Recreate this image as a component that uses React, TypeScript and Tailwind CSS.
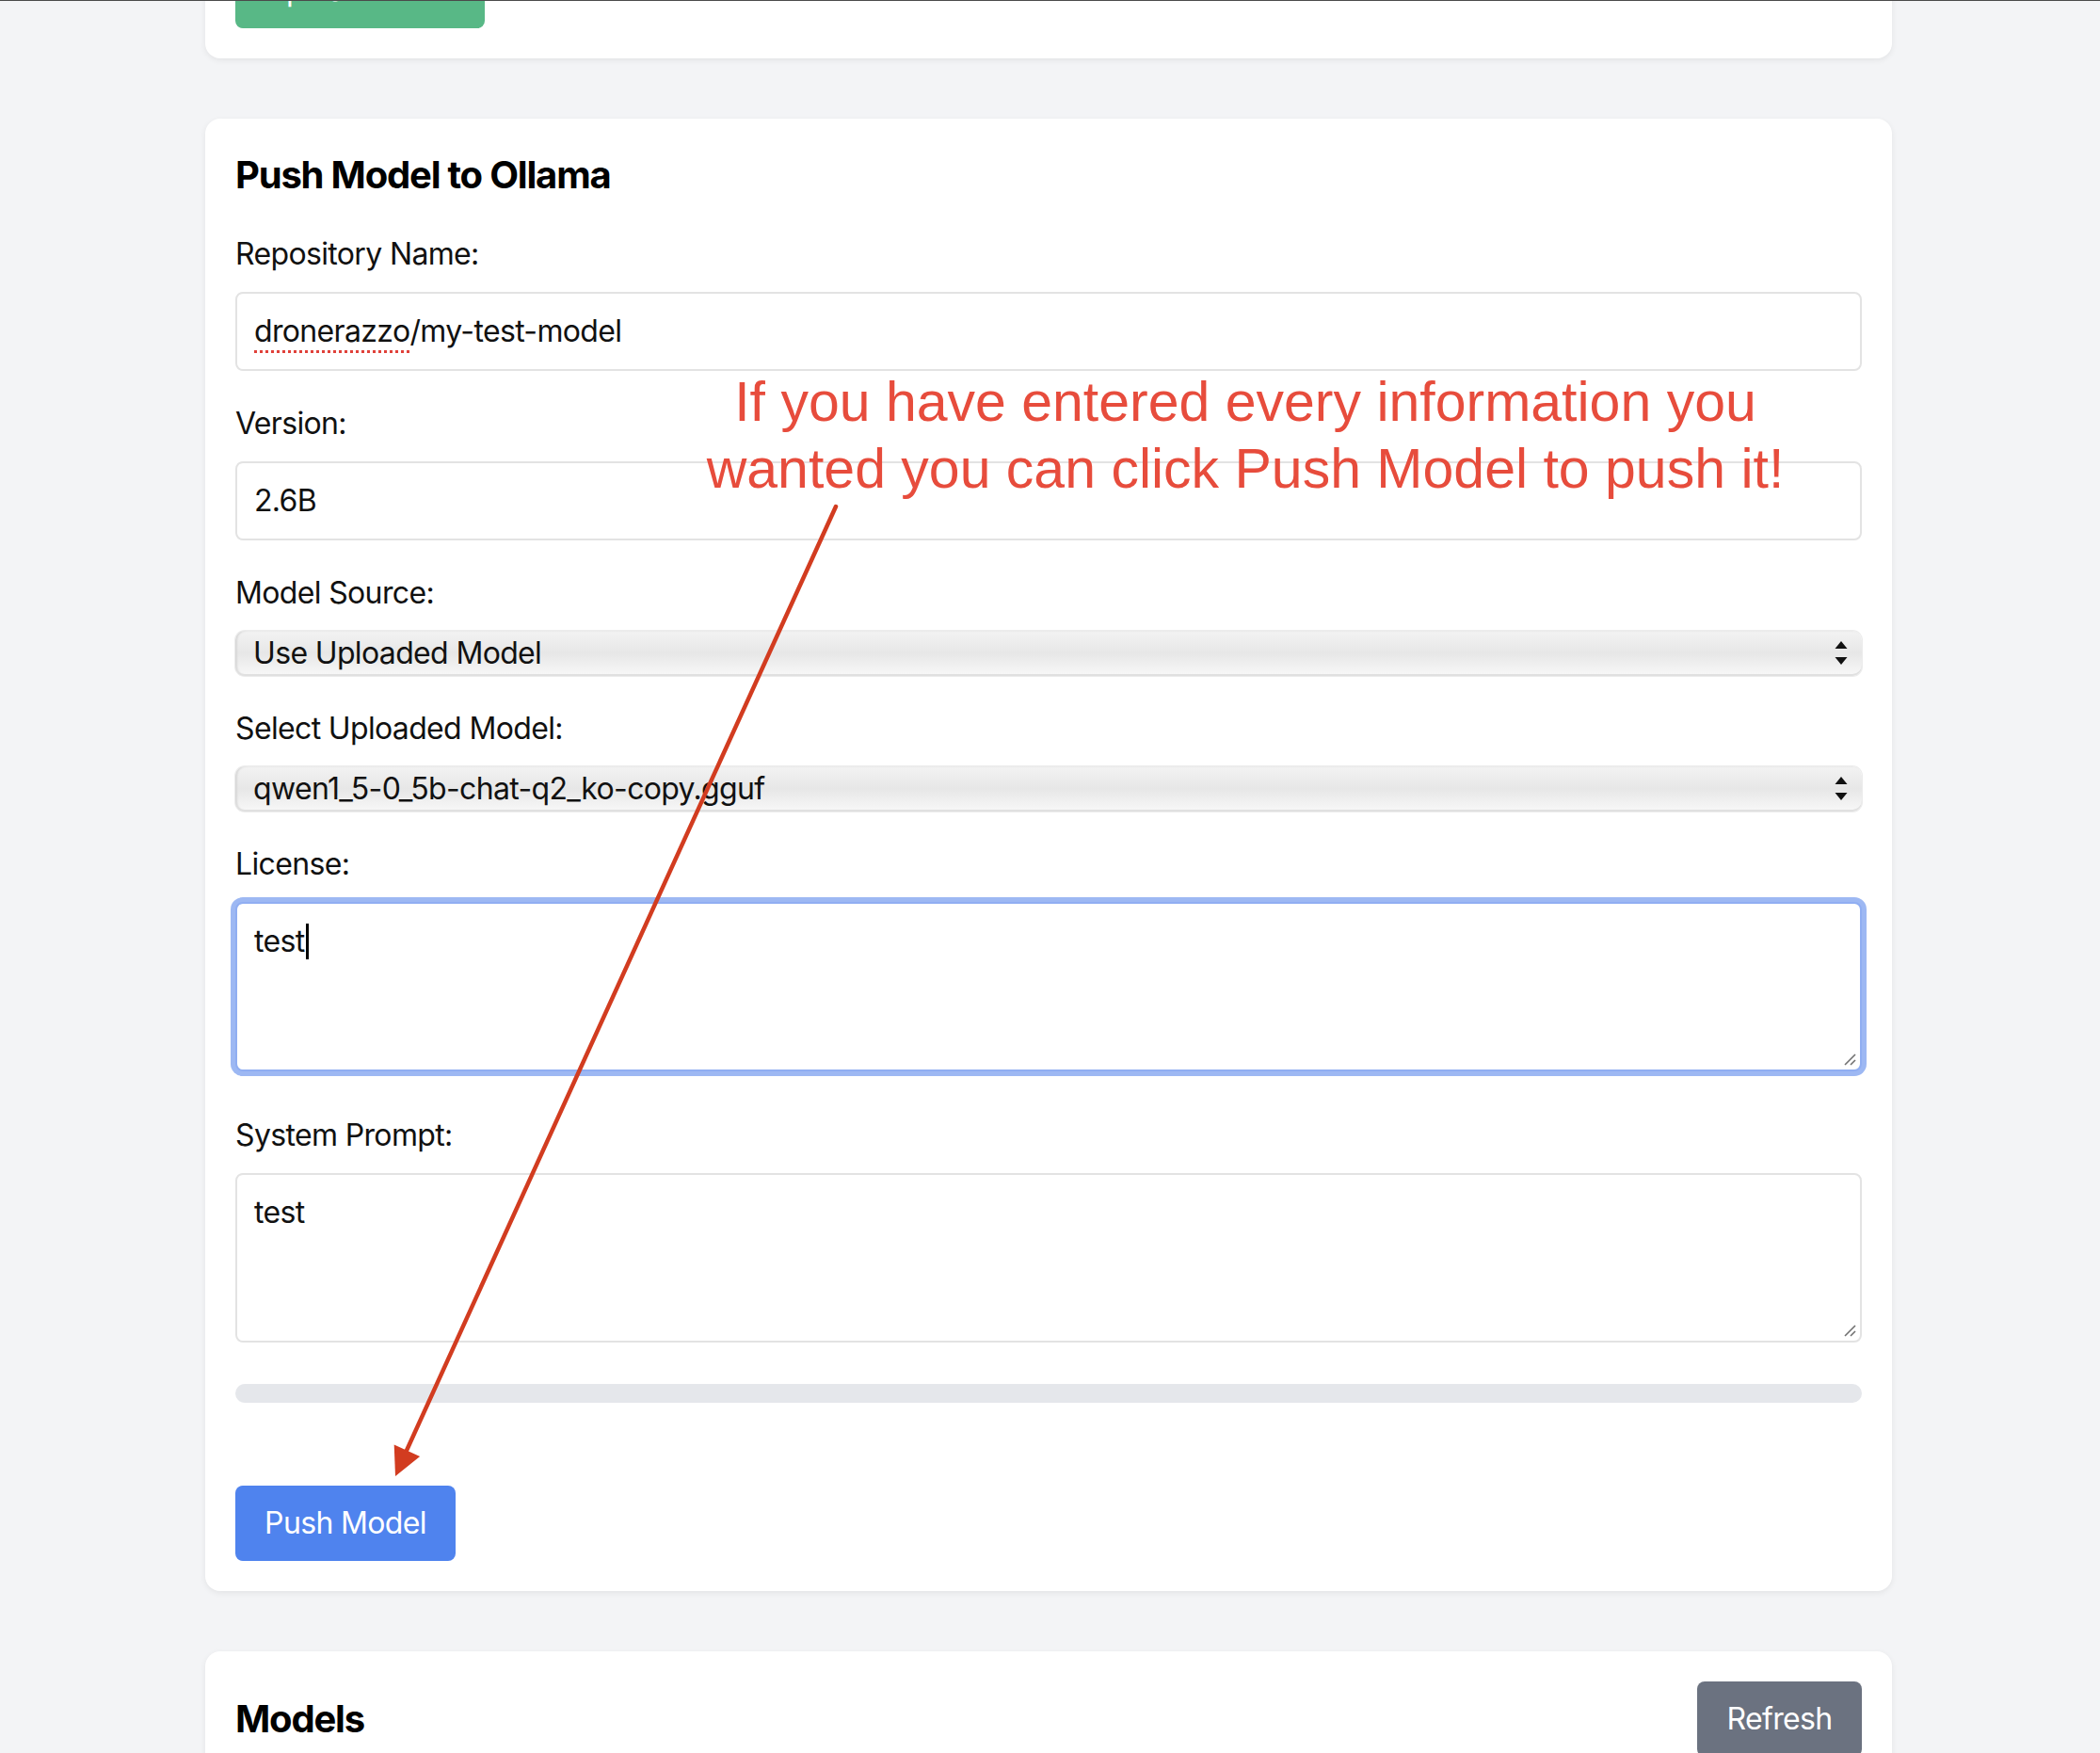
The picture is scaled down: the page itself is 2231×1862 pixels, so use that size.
import React from "react";

function Label({ children }: { children: React.ReactNode }) {
  return <div className="mb-[16px] text-[32px] leading-[48px] text-[#111]">{children}</div>;
}

function TextBox({ children }: { children: React.ReactNode }) {
  return (
    <div className="flex h-[84px] w-full items-center rounded-[8px] border-2 border-[#e3e3e3] bg-white px-[18px] text-[32px] leading-[48px] text-[#111]">
      {children}
    </div>
  );
}

function UpDown() {
  return (
    <svg width="14" height="26" viewBox="0 0 14 26" className="shrink-0">
      <path d="M7 0 L13.5 8 L0.5 8 Z" fill="#111" />
      <path d="M0.5 17 L13.5 17 L7 25 Z" fill="#111" />
    </svg>
  );
}

function SelectBox({ value }: { value: string }) {
  return (
    <div className="flex h-[48px] w-full items-center justify-between rounded-[10px] bg-linear-to-b from-[#f3f3f3] via-[#e7e7e7] to-[#f8f8f8] pl-[19px] pr-[15px] text-[32px] leading-[48px] text-[#111] shadow-[inset_0_-2px_0_#e0e0e0,inset_2px_0_2px_#d8d8d8,0_0_0_1px_#ececec]">
      <span className="whitespace-nowrap">{value}</span>
      <UpDown />
    </div>
  );
}

function Grip() {
  return (
    <svg width="14" height="14" viewBox="0 0 14 14" className="absolute bottom-[4px] right-[4px]">
      <path d="M2 13 L13 2" stroke="#707070" strokeWidth="1.6" />
      <path d="M8 13 L13 8" stroke="#707070" strokeWidth="1.6" />
    </svg>
  );
}

function TextArea({ children, focused }: { children: React.ReactNode; focused?: boolean }) {
  return (
    <div
      className={
        focused
          ? "relative h-[180px] w-full rounded-[8px] border-2 border-[#90aef2] bg-white px-[18px] py-[16px] text-[32px] leading-[48px] text-[#111] shadow-[0_0_0_5px_#9db8f3]"
          : "relative h-[180px] w-full rounded-[8px] border-2 border-[#e3e3e3] bg-white px-[18px] py-[16px] text-[32px] leading-[48px] text-[#111]"
      }
    >
      {children}
      <Grip />
    </div>
  );
}

export default function App() {
  return (
    <div className="relative min-h-screen overflow-hidden bg-[#f3f4f6] font-['Inter','Noto_Sans',sans-serif] tracking-[-0.65px]">
      <div className="absolute left-0 right-0 top-0 z-10 h-px bg-[#4a4a4a]" />

      <div className="-mt-[82px] ml-[218px] flex w-[1792px] flex-col gap-[64px]">
        {/* Upload card (scrolled out) */}
        <div className="rounded-[16px] bg-white p-[32px] shadow-[0_2px_6px_rgba(0,0,0,0.07)]">
          <div className="flex h-[80px] w-[265px] items-center justify-center rounded-[8px] bg-[#58b886] text-[32px] text-white">
            Upload Model
          </div>
        </div>

        {/* Push card */}
        <div className="rounded-[16px] bg-white p-[32px] shadow-[0_2px_6px_rgba(0,0,0,0.07)]">
          <h2 className="mb-[32px] text-[40px] font-bold leading-[56px] tracking-[-1.2px] text-black">Push Model to Ollama</h2>

          <div className="mb-[32px]">
            <Label>Repository Name:</Label>
            <TextBox>
              <span className="underline decoration-[#e0413a] decoration-dotted decoration-[3px] underline-offset-[9px]">
                dronerazzo
              </span>
              <span>/my-test-model</span>
            </TextBox>
          </div>

          <div className="mb-[32px]">
            <Label>Version:</Label>
            <TextBox>2.6B</TextBox>
          </div>

          <div className="mb-[32px]">
            <Label>Model Source:</Label>
            <SelectBox value="Use Uploaded Model" />
          </div>

          <div className="mb-[32px]">
            <Label>Select Uploaded Model:</Label>
            <SelectBox value="qwen1_5-0_5b-chat-q2_ko-copy.gguf" />
          </div>

          <div className="mb-[44px]">
            <Label>License:</Label>
            <TextArea focused>
              <span className="inline-flex items-center">
                test
                <span className="ml-[1px] inline-block h-[38px] w-[3px] bg-black" />
              </span>
            </TextArea>
          </div>

          <div className="mb-[44px]">
            <Label>System Prompt:</Label>
            <TextArea>test</TextArea>
          </div>

          <div className="mb-[16px] h-[20px] w-full rounded-full bg-[#e5e7eb]" />
          <div className="mb-[32px] h-[40px] text-[28px] leading-[40px] text-white">&nbsp;</div>

          <div className="flex h-[80px] w-[234px] items-center justify-center rounded-[8px] bg-[#4f83ee] text-[32px] text-white">
            Push Model
          </div>
        </div>

        {/* Models card */}
        <div className="rounded-[16px] bg-white p-[32px] shadow-[0_2px_6px_rgba(0,0,0,0.07)]">
          <div className="flex items-center justify-between">
            <h2 className="text-[40px] font-bold leading-[56px] tracking-[-1.2px] text-black">Models</h2>
            <div className="flex h-[80px] w-[175px] items-center justify-center rounded-[8px] bg-[#6b7280] text-[32px] text-white">
              Refresh
            </div>
          </div>
          <div className="h-[200px]" />
        </div>
      </div>

      {/* Annotation overlay */}
      <div className="pointer-events-none absolute left-[723px] top-[392px] w-[1200px] whitespace-nowrap text-center font-['Liberation_Sans','Arial',sans-serif] text-[59px] leading-[71px] tracking-normal text-[#e74c3c]">
        If you have entered every information you
        <br />
        wanted you can click Push Model to push it!
      </div>
      <svg className="pointer-events-none absolute left-0 top-0" width="2231" height="1862" viewBox="0 0 2231 1862">
        <line x1="888" y1="538" x2="430" y2="1545" stroke="#d23c20" strokeWidth="4.5" strokeLinecap="round" />
        <polygon points="420,1568 418.7,1534.5 446.1,1546.9" fill="#d23c20" />
      </svg>

      <div className="pointer-events-none absolute bottom-0 left-0 right-0 h-[110px] bg-linear-to-b from-transparent to-black/[0.06]" />
    </div>
  );
}
